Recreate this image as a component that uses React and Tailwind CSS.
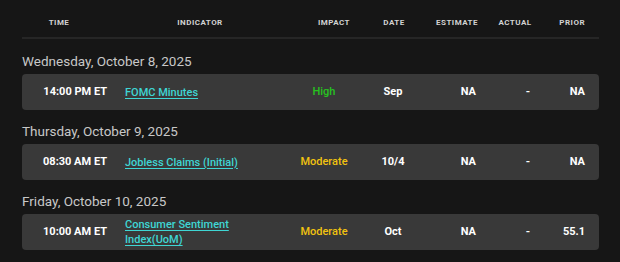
const EVENTS = [
  {
    day: 'Wednesday, October 8, 2025',
    time: '14:00 PM ET',
    name: 'FOMC Minutes',
    impact: 'High',
    date: 'Sep',
    estimate: 'NA',
    actual: '-',
    prior: 'NA',
  },
  {
    day: 'Thursday, October 9, 2025',
    time: '08:30 AM ET',
    name: 'Jobless Claims (Initial)',
    impact: 'Moderate',
    date: '10/4',
    estimate: 'NA',
    actual: '-',
    prior: 'NA',
  },
  {
    day: 'Friday, October 10, 2025',
    time: '10:00 AM ET',
    name: 'Consumer Sentiment Index(UoM)',
    impact: 'Moderate',
    date: 'Oct',
    estimate: 'NA',
    actual: '-',
    prior: '55.1',
  },
]

const IMPACT_COLORS = {
  High: 'text-[#27c21f]',
  Moderate: 'text-[#f2c30f]',
}

export default function App() {
  return (
    <div
      className="w-[620px] h-[262px] bg-[#161616] overflow-hidden"
      style={{ fontFamily: 'Roboto, "Liberation Sans", sans-serif' }}
    >
      <div className="ml-[22px] w-[577px]">
        {/* Column headings */}
        <div className="flex items-center pt-[17px] pb-[8px] border-b-2 border-[#262626] text-[8px] leading-[12px] font-bold tracking-[0.06em] text-[#d2d2d2]">
          <div className="w-[74px] text-center">TIME</div>
          <div className="w-[208px] text-center">INDICATOR</div>
          <div className="w-[60px] text-center">IMPACT</div>
          <div className="w-[60px] text-center">DATE</div>
          <div className="w-[66px] text-center">ESTIMATE</div>
          <div className="w-[50px] text-center">ACTUAL</div>
          <div className="flex-1 text-right pr-[14px]">PRIOR</div>
        </div>

        <div className="pt-[12px]">
          {EVENTS.map((ev) => (
            <div key={ev.day} className="mb-[11px]">
              <div className="h-[20px] leading-[20px] text-[13.5px] text-[#c8c8c8]">{ev.day}</div>
              <div className="mt-[3px] h-[36px] rounded-[4px] bg-[#393939] flex items-center text-[11px] font-bold text-white">
                <div className="w-[85px] text-right">{ev.time}</div>
                <div className="w-[183px] pl-[18px] pr-[4px] leading-[15px]">
                  <a className="text-[#3fd6d4] font-medium underline underline-offset-2 decoration-1">{ev.name}</a>
                </div>
                <div className={`w-[68px] text-center font-medium ${IMPACT_COLORS[ev.impact]}`}>{ev.impact}</div>
                <div className="w-[70px] text-center">{ev.date}</div>
                <div className="w-[48px] text-right">{ev.estimate}</div>
                <div className="w-[54px] text-right">{ev.actual}</div>
                <div className="flex-1 text-right pr-[14px]">{ev.prior}</div>
              </div>
            </div>
          ))}
        </div>
      </div>
    </div>
  )
}
